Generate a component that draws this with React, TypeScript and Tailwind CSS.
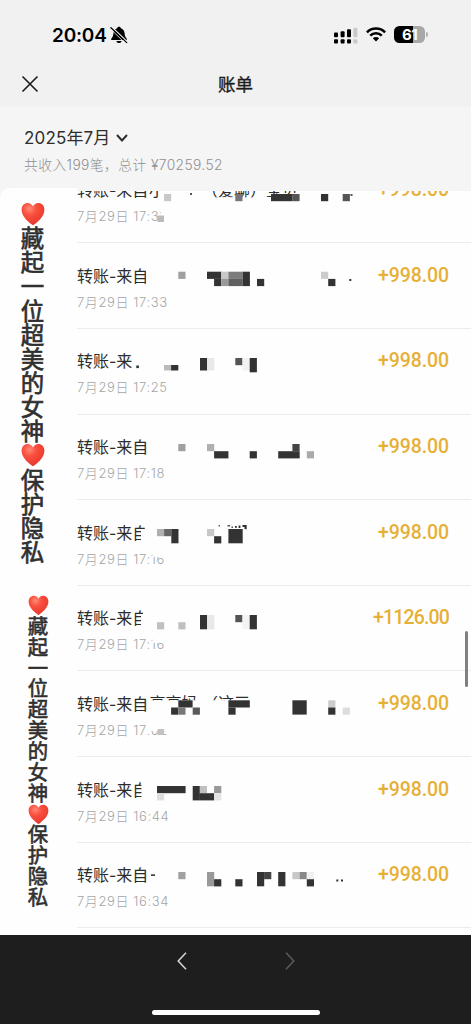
import clsx from 'clsx'

// x, y, width, height, fill; x is measured from the page, y from the row's top
type Block = [number, number, number, number, string]

interface Fragment {
  x: number
  text: string
}

interface Transfer {
  time: string
  amount: string
  fragments?: Fragment[]
  blocks: Block[]
}

const DARK = '#333333'
const PAPER = '#fefefe'

const transfers: Transfer[] = [
  {
    time: '7月29日 17:33',
    amount: '+998.00',
    fragments: [
      { x: 149, text: '小' },
      { x: 202, text: '（爱聊）' },
      { x: 266, text: '宝贝' },
    ],
    blocks: [
      [160, 25, 5, 16, PAPER],
      [164, 36, 7.2, 7.2, '#c8c8c8'],
      [190, 35, 2, 2, '#555555'],
      [205, 39.5, 62, 5, PAPER],
      [235.3, 36, 7.2, 7.2, '#777777'],
      [266, 39, 36, 7, PAPER],
      [271, 36, 21.5, 7.2, DARK],
      [292.4, 36, 7.2, 7.2, '#555555'],
      [321, 36, 7.2, 7.2, DARK],
      [342.7, 36, 7.2, 7.2, '#555555'],
      [350.5, 36, 2, 2, '#555555'],
      [161, 51, 9, 14, PAPER],
      [157.5, 57.5, 6.5, 6.5, '#bbbbbb'],
    ],
  },
  {
    time: '7月29日 17:33',
    amount: '+998.00',
    blocks: [
      [146.3, 24, 4, 18, PAPER],
      [178.3, 28.7, 7.2, 7.2, '#a0a0a0'],
      [207, 28.7, 14.3, 7.2, DARK],
      [214.1, 35.9, 7.2, 7.2, DARK],
      [221.3, 28.7, 7.2, 7.2, '#c8c8c8'],
      [221.3, 35.9, 7.2, 7.2, '#999999'],
      [228.4, 28.7, 14.3, 7.2, '#7c7c7c'],
      [228.4, 35.9, 14.3, 7.2, '#606060'],
      [242.7, 28.7, 7.2, 14.4, DARK],
      [257, 35.9, 7.2, 7.2, DARK],
      [321, 28.7, 7.2, 7.2, '#cccccc'],
      [328.2, 35.9, 7.2, 7.2, DARK],
      [349.3, 36, 2, 2, DARK],
    ],
  },
  {
    time: '7月29日 17:25',
    amount: '+998.00',
    blocks: [
      [133.3, 22, 18, 20, PAPER],
      [136.3, 36.5, 2.6, 2.6, DARK],
      [164, 36, 7.2, 5.5, '#bbbbbb'],
      [171.1, 36, 7.2, 5.5, DARK],
      [200, 29, 7.2, 12.5, DARK],
      [207.1, 29, 7.2, 12.5, '#e8e8e8'],
      [235.3, 29, 7.2, 7.2, '#555555'],
      [242.5, 29, 7.2, 12.5, '#f2f2f2'],
      [249.7, 29, 7.2, 14.3, DARK],
    ],
  },
  {
    time: '7月29日 17:18',
    amount: '+998.00',
    blocks: [
      [178.3, 29, 7.2, 7.2, '#a0a0a0'],
      [207, 29, 7.2, 7.2, '#b0b0b0'],
      [214.1, 36.2, 14.3, 7.2, DARK],
      [249.7, 36.2, 7.2, 7.2, DARK],
      [278.2, 36.2, 21.5, 7.2, DARK],
      [292.4, 29, 7.2, 7.2, '#444444'],
      [306.8, 36.2, 7.2, 7.2, '#aaaaaa'],
    ],
  },
  {
    time: '7月29日 17:16',
    amount: '+998.00',
    blocks: [
      [141, 29, 9, 13, PAPER],
      [144.8, 24, 5, 6, PAPER],
      [157, 29, 7.2, 7.2, '#b0b0b0'],
      [164.1, 29, 7.2, 7.2, '#666666'],
      [171.3, 29, 7.2, 14.3, DARK],
      [207, 29, 7.2, 7.2, '#c8c8c8'],
      [214.1, 36.2, 7.2, 7.2, DARK],
      [228.4, 29, 14.3, 14.3, DARK],
      [218.5, 25, 1.5, 1.5, '#666666'],
      [227.5, 25, 2.5, 1.5, '#555555'],
      [231.5, 26.5, 1.5, 1.5, '#555555'],
      [235, 26, 1.8, 1.8, DARK],
      [238.6, 25.5, 1.8, 2.5, DARK],
      [242.5, 25, 4.2, 2, DARK],
      [244.5, 27, 2.2, 2.2, DARK],
      [152.5, 52, 17, 4.8, PAPER],
    ],
  },
  {
    time: '7月29日 17:16',
    amount: '+1126.00',
    blocks: [
      [141, 29, 9, 13, PAPER],
      [143, 24, 7, 6, PAPER],
      [157, 36.2, 7.2, 7.2, '#c0c0c0'],
      [178.3, 36.2, 7.2, 7.2, '#c0c0c0'],
      [200, 29, 7.2, 14.3, DARK],
      [207.1, 29, 7.2, 14.3, '#e8e8e8'],
      [235.3, 29, 7.2, 7.2, '#555555'],
      [242.5, 29, 7.2, 14.3, '#f4f4f4'],
      [249.7, 29, 7.2, 14.3, DARK],
      [152.5, 52, 17, 4.8, PAPER],
    ],
  },
  {
    time: '7月29日 17:02',
    amount: '+998.00',
    fragments: [
      { x: 149.5, text: '亮亮妈' },
      { x: 202, text: '（这三' },
    ],
    blocks: [
      [149, 29.3, 110, 15, PAPER],
      [178.3, 29.3, 14.3, 7.2, DARK],
      [171.1, 36.5, 7.2, 7.2, DARK],
      [178.3, 36.5, 7.2, 7.2, '#777777'],
      [192.7, 36.5, 7.2, 7.2, '#5a5a5a'],
      [228.4, 29.3, 21.4, 7.2, DARK],
      [228.4, 36.5, 7.2, 7.2, DARK],
      [292.4, 29.3, 14.3, 14.3, DARK],
      [328.2, 29.3, 7.2, 7.2, '#cccccc'],
      [328.2, 36.5, 7.2, 7.2, DARK],
      [342.7, 36.5, 7.2, 7.2, '#dddddd'],
      [146, 52, 22, 8, PAPER],
      [157.5, 58, 6.5, 6, '#c2c2c2'],
    ],
  },
  {
    time: '7月29日 16:44',
    amount: '+998.00',
    blocks: [
      [141.4, 24, 9, 18, PAPER],
      [157, 29, 28.6, 7.2, DARK],
      [157, 36.2, 7.2, 7.2, '#dddddd'],
      [192.7, 29, 7.2, 14.4, DARK],
      [199.8, 29, 7.2, 7.2, '#c0c0c0'],
      [199.8, 36.2, 14.4, 7.2, DARK],
      [214.1, 29, 7.2, 7.2, '#999999'],
      [214.1, 36.2, 7.2, 7.2, '#e4e4e4'],
    ],
  },
  {
    time: '7月29日 16:34',
    amount: '+998.00',
    blocks: [
      [151, 31.3, 4, 1.6, DARK],
      [178.3, 29, 7.2, 7.2, '#a0a0a0'],
      [207, 29, 7.2, 14.3, '#999999'],
      [214.1, 36.2, 7.2, 7.2, DARK],
      [235.3, 36.2, 7.2, 7.2, DARK],
      [257, 29, 7.2, 14.3, DARK],
      [264.1, 29, 7.2, 7.2, '#444444'],
      [278.2, 29, 7.2, 14.3, DARK],
      [292.4, 29, 7.2, 7.2, '#c8c8c8'],
      [299.6, 29, 7.2, 7.2, '#888888'],
      [306.8, 29, 7.2, 7.2, '#f0f0f0'],
      [306.8, 36.2, 7.2, 7.2, DARK],
      [336.3, 36.5, 2, 2, DARK],
      [341, 36.5, 2, 2, DARK],
    ],
  },
]

const caption = [...'♥藏起一位超美的女神♥保护隐私']

function Heart({ id }: { id: string }) {
  return (
    <svg viewBox="0 0 24 24" className="h-full w-full">
      <defs>
        <radialGradient id={id} cx="0.35" cy="0.25" r="0.85">
          <stop offset="0" stopColor="#ff8a75" />
          <stop offset="0.35" stopColor="#f9503f" />
          <stop offset="0.75" stopColor="#ec3d31" />
          <stop offset="1" stopColor="#b92d25" />
        </radialGradient>
      </defs>
      <path
        d="M12 23.2C8.6 20.6.6 15.2.6 7.6.6 3.7 3.4 1 6.6 1 9 1 11 2.3 12 4.4 13 2.3 15 1 17.4 1c3.2 0 6 2.7 6 6.6 0 7.6-8 13-11.4 15.6z"
        fill={`url(#${id})`}
      />
    </svg>
  )
}

function Caption({ name, small }: { name: string; small?: boolean }) {
  return (
    <div
      className={clsx(
        'flex flex-col items-center text-[#303030]',
        small
          ? 'w-5 text-[20.4px] leading-[20.85px] [-webkit-text-stroke:0.6px_#303030]'
          : 'w-6 text-[23.4px] leading-[24.15px] [-webkit-text-stroke:0.7px_#303030]'
      )}
    >
      {caption.map((char, i) => (
        <div key={i} className={clsx('text-center', small ? 'h-[20.85px] w-[21px]' : 'h-[24.15px] w-6')}>
          {char === '♥' ? <Heart id={`${name}-${i}`} /> : <div className="pt-px">{char}</div>}
        </div>
      ))}
    </div>
  )
}

function SilentBell() {
  return (
    <svg viewBox="0 0 18 18" className="h-[18px] w-[18px]">
      <path
        d="M9 .8c1 0 1.700.6 1.800 1.400 2.400.8 3.700 2.700 3.800 5.100.1 2.700.8 3.700 2 5.200.6.7.3 1.600-.7 1.600H2.100c-1 0-1.300-.9-.7-1.600 1.200-1.500 1.900-2.500 2-5.200.1-2.400 1.400-4.300 3.800-5.100C7.300 1.400 8 .8 9 .8z"
        fill="#000"
      />
      <path d="M6.4 15h5.2c-.2 1.3-1.2 2.100-2.600 2.100S6.600 16.300 6.400 15z" fill="#000" />
      <path d="M1.500 0.800l15.700 14.900" stroke="#f1f1f1" strokeWidth="1.3" />
      <path d="M0.900 1.700l15.800 14.900" stroke="#000" strokeWidth="1.3" strokeLinecap="round" />
      <path d="M0.300 2.900l15.500 14.700" stroke="#f1f1f1" strokeWidth="0.8" />
    </svg>
  )
}

function Signal() {
  return (
    <svg viewBox="0 0 24 17" className="h-[17px] w-6">
      <g fill="#000">
        <rect x="0" y="5.5" width="4" height="4.8" rx="1" />
        <rect x="6.6" y="4.2" width="4" height="6.1" rx="1" />
        <rect x="13" y="2.2" width="4" height="8.1" rx="1" />
        <rect x="0" y="12.2" width="4" height="4.2" rx="1" />
        <rect x="6.6" y="12.2" width="4" height="4.2" rx="1" />
        <rect x="13" y="12.2" width="4" height="4.2" rx="1" />
      </g>
      <g fill="#c9c9c9">
        <rect x="19.4" y="0.8" width="4" height="9.5" rx="1" />
        <rect x="19.4" y="12.2" width="4" height="4.2" rx="1" />
      </g>
    </svg>
  )
}

function Wifi() {
  return (
    <svg viewBox="0 0 20 15" className="-mt-[2px] h-[15px] w-5">
      <g fill="none" stroke="#000" strokeWidth="2.5">
        <path d="M0.9 5.3a13 13 0 0 1 18.2 0" />
        <path d="M4.2 8.7a8.3 8.3 0 0 1 11.6 0" />
      </g>
      <path d="M6.8 11.3a4.6 4.6 0 0 1 6.4 0L10 14.5z" fill="#000" />
    </svg>
  )
}

function Battery() {
  return (
    <div className="-mt-px flex items-center gap-px">
      <div className="flex h-[17px] w-[31px] items-center justify-center rounded-[5.5px] bg-linear-to-r from-black from-61% to-[#a8a8a8] to-61%">
        <span className="text-[15px] leading-none font-bold tracking-[-0.5px] text-white">61</span>
      </div>
      <div className="h-[5px] w-[2px] rounded-r-full bg-[#b0b0b0]" />
    </div>
  )
}

function TransferRow({ transfer }: { transfer: Transfer }) {
  return (
    <div className="relative h-[85.65px] shrink-0 border-b border-[#ececec] pr-[22px]">
      <div className="flex h-full items-start justify-between pt-[20.5px]">
        <div>
          <div className="text-base leading-6 text-[#2c2c2c]">转账-来自</div>
          <div className="mt-[5px] text-[13px] leading-[18px] font-light tracking-[0.6px] text-[#a6a6a6]">{transfer.time}</div>
        </div>
        <div
          className={clsx(
            'font-[Roboto] text-[19.5px] leading-6 font-medium text-[#e6b036]',
            transfer.amount.length > 7 ? 'tracking-[-0.85px]' : 'tracking-[-0.1px]'
          )}
        >
          {transfer.amount}
        </div>
      </div>
      <svg viewBox="77 0 290 85" className="absolute top-0 left-0 h-[85px] w-[290px]">
        {transfer.fragments?.map((f) => (
          <text key={f.x} x={f.x} y="38.4" fontSize="16" fill="#2c2c2c">
            {f.text}
          </text>
        ))}
        {transfer.blocks.map(([x, y, width, height, fill], i) => (
          <rect key={i} x={x} y={y} width={width} height={height} fill={fill} />
        ))}
      </svg>
    </div>
  )
}

export default function App() {
  return (
    <div className="relative flex h-[1024px] w-[471px] flex-col overflow-hidden bg-[#fefefe] font-[Inter,'Noto_Sans_CJK_SC',sans-serif]">
      <header className="h-[107px] shrink-0 bg-[#f1f1f1]">
        <div className="flex h-[60px] items-center justify-between pt-[10px] pr-[43px] pl-[52px]">
          <div className="flex items-center gap-[3px]">
            <span className="text-[19px] leading-none font-semibold tracking-[-0.2px] text-black">20:04</span>
            <SilentBell />
          </div>
          <div className="flex items-center gap-2">
            <Signal />
            <Wifi />
            <Battery />
          </div>
        </div>
        <div className="grid h-[47px] grid-cols-3 items-center px-[22px]">
          <svg viewBox="0 0 16 16" className="h-4 w-4 overflow-visible">
            <path d="M0.5 0.5l15 15M15.5 0.5l-15 15" stroke="#1c1c1c" strokeWidth="1.6" />
          </svg>
          <h1 className="pt-[3px] text-center text-[17.5px] text-[#1c1c1c] [-webkit-text-stroke:0.35px_#1c1c1c]">账单</h1>
        </div>
      </header>

      <section className="h-[81px] shrink-0 bg-[#f5f5f5] pt-[19px] pl-6">
        <div className="flex items-center gap-[6px]">
          <span className="text-[17px] leading-6 tracking-[0.15px] text-[#2e2e2e]">2025年7月</span>
          <svg viewBox="0 0 12 8" className="h-2 w-3">
            <path d="M1 1l5 5.5 5-5.5" fill="none" stroke="#2e2e2e" strokeWidth="2" />
          </svg>
        </div>
        <p className="mt-[5px] text-[13.8px] leading-5 font-light tracking-[0.4px] text-[#8f8f8f]">共收入199笔，总计 ¥70259.52</p>
      </section>

      <main className="flex min-h-0 flex-1 bg-[#f5f5f5]">
        <aside className="flex w-[77px] shrink-0 flex-col rounded-tl-[10px] bg-[#fefefe] pt-[14px]">
          <div className="pl-[20.5px]">
            <Caption name="top" />
          </div>
          <div className="mt-[31px] pl-7">
            <Caption name="bottom" small />
          </div>
        </aside>
        <div className="mt-[2.5px] flex flex-1 flex-col overflow-hidden bg-[#fefefe]">
          <div className="-mt-[32.9px] flex flex-col">
            {transfers.map((transfer, i) => (
              <TransferRow key={i} transfer={transfer} />
            ))}
          </div>
        </div>
      </main>

      <footer className="flex h-[89px] shrink-0 flex-col items-center justify-between bg-[#1e1e1e] pt-[17px] pb-[9px]">
        <div className="flex gap-[98px]">
          <svg viewBox="0 0 10 18" className="h-[18px] w-[10px]">
            <path d="M9 0.8L1.2 9 9 17.2" fill="none" stroke="#d8d8d8" strokeWidth="1.5" />
          </svg>
          <svg viewBox="0 0 10 18" className="h-[18px] w-[10px]">
            <path d="M1 0.8L8.8 9 1 17.2" fill="none" stroke="#5c5c5c" strokeWidth="1.5" />
          </svg>
        </div>
        <div className="h-[5px] w-[168px] rounded-full bg-white" />
      </footer>

      {/* scroll thumb */}
      <div className="absolute top-[631px] right-[3px] h-[56px] w-[3px] rounded-full bg-[#808080]" />
    </div>
  )
}
